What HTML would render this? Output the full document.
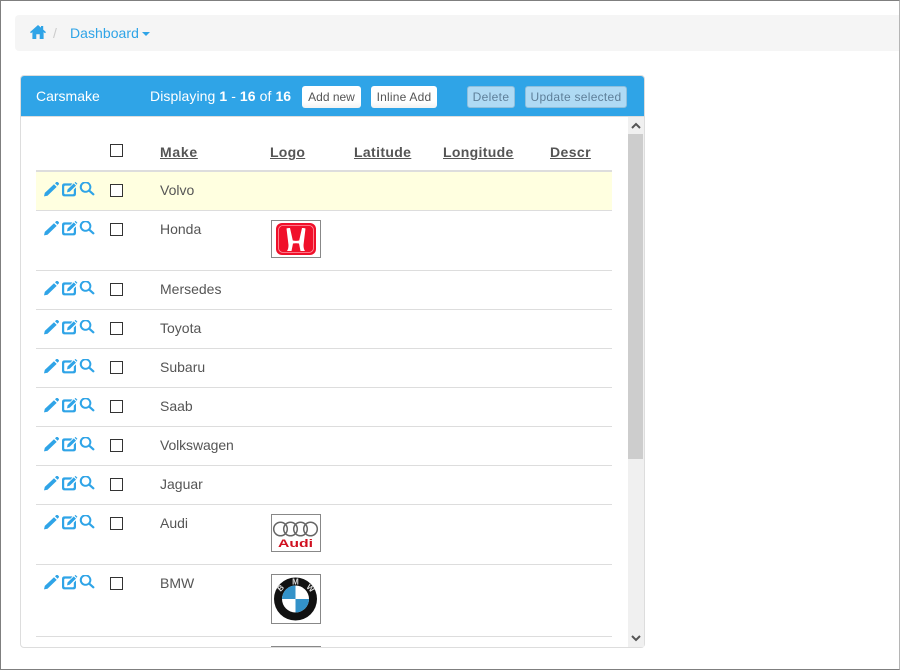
<!DOCTYPE html>
<html><head><meta charset="utf-8"><style>
*{box-sizing:border-box}
html,body{margin:0;padding:0;background:#fff}
body{width:900px;height:670px;position:relative;overflow:hidden;font:14px/20px "Liberation Sans",sans-serif;color:#555}
.a{position:absolute}
.t{position:absolute;white-space:nowrap}
.ln{position:absolute;left:36px;width:576px;height:1px;background:#ddd}
.cb{position:absolute;left:110px;width:13px;height:13px;border:1px solid #333;background:#fff}
.th{position:absolute;top:142px;font-weight:bold;text-decoration:underline;white-space:nowrap;color:#555}
.btn{position:absolute;top:86px;height:22px;background:linear-gradient(#fff 70%,#f2f2f2);border-radius:3px;font-size:12px;line-height:22px;text-align:center;color:#555;white-space:nowrap}
.dis{background:#afdaf4;border:1px solid #8fbfdc;color:#5e7f99;line-height:20px;letter-spacing:.33px}
.img{position:absolute;left:271px;width:50px;border:1px solid #888;background:#fff}
.ic{position:absolute;left:43px;width:52px;height:16px}
</style></head><body>
<svg width="0" height="0" style="position:absolute"><defs>
<g id="icons" fill="#2fa4e7" transform="translate(0,-.6)">
<path d="M1 15 L1.800 11.500 L11 2.800 L13.700 5.500 L4.500 14.300 Z"/><path d="M12 1.800 L13.300 .6 Q14 .1 14.800 .7 L15.800 1.700 Q16.300 2.400 15.700 3.100 L14.500 4.400 Z"/>
<path d="M21.500 2 H29.500 L27.500 4.200 H22.200 Q21.200 4.200 21.200 5.200 V11.800 Q21.200 12.800 22.200 12.800 H29.800 Q30.800 12.800 30.800 11.800 V8.200 L33 6 V12.500 Q33 15 30.500 15 H21.500 Q19 15 19 12.500 V4.500 Q19 2 21.500 2 Z"/><path d="M24.600 8 L30.800 2 L33 4.200 L26.800 10.200 L24 11 Z"/><path d="M31.600 1.300 L32.500 .5 L34.400 2.400 L33.600 3.300 Z"/>
<path fill-rule="evenodd" transform="translate(.6,0)" d="M42 0 A5.700 5.700 0 0 1 46.800 8.800 L50.600 12.200 Q51.200 13 50.500 13.700 Q49.700 14.300 49 13.700 L45.200 10.300 A5.700 5.700 0 1 1 42 0 Z M42 1.900 A3.800 3.800 0 1 0 42 9.500 A3.800 3.800 0 1 0 42 1.900 Z"/>
</g></defs></svg>

<!-- window border -->
<div class="a" style="left:0;top:0;width:900px;height:670px;border:1px solid #7f7f7f;border-right-color:#b5b5b5;z-index:9;pointer-events:none"></div>

<!-- breadcrumb -->
<div class="a" style="left:15px;top:15px;width:884px;height:36px;background:#f5f5f5;border-radius:4px 0 0 4px"></div>
<svg class="a" style="left:30px;top:25px" width="16" height="14" viewBox="0 0 16 14"><path fill="#2fa4e7" d="M8 0 L11 2.600 V1 H13.200 V4.600 L16 7.100 L15 8.200 L13.600 7.100 V14 H9.700 V9.300 H6.300 V14 H2.400 V7.100 L1 8.200 L0 7.100 Z"/></svg>
<div class="t" style="left:53px;top:23px;color:#ccc">/</div>
<div class="t" style="left:70px;top:23px;color:#2fa4e7;letter-spacing:.05px">Dashboard</div>
<div class="a" style="left:142px;top:32px;width:0;height:0;border-left:4px solid transparent;border-right:4px solid transparent;border-top:4px solid #2fa4e7"></div>

<!-- panel -->
<div class="a" style="left:20px;top:75px;width:625px;height:573px;border:1px solid #ddd;border-radius:4px;background:#fff;overflow:hidden"></div>
<div class="a" style="left:21px;top:76px;width:623px;height:41px;background:#2fa4e7;border-radius:3px 3px 0 0;border-bottom:1px solid #ddd"></div>
<div class="t" style="left:36px;top:86px;color:#fff">Carsmake</div>
<div class="t" style="left:150px;top:86px;color:#fff;letter-spacing:.08px">Displaying <b>1</b> - <b>16</b> of <b>16</b></div>
<div class="btn" style="left:302px;width:59px">Add new</div>
<div class="btn" style="left:371px;width:66px;letter-spacing:.2px">Inline Add</div>
<div class="btn dis" style="left:467px;width:48px">Delete</div>
<div class="btn dis" style="left:525px;width:102px;letter-spacing:.28px">Update selected</div>

<!-- scrollbar -->
<div class="a" style="left:628px;top:117px;width:16px;height:530px;background:#f0f0f0"></div>
<div class="a" style="left:628px;top:134px;width:15px;height:325px;background:#cdcdcd"></div>
<svg class="a" style="left:628px;top:117px" width="16" height="17"><path d="M4 11 L8 7 L12 11" fill="none" stroke="#555" stroke-width="2"/></svg>
<svg class="a" style="left:628px;top:631px" width="16" height="16"><path d="M4 5 L8 9 L12 5" fill="none" stroke="#555" stroke-width="2"/></svg>

<!-- header row -->
<div class="cb" style="top:144px"></div>
<div class="th" style="left:160px;letter-spacing:.7px">Make</div>
<div class="th" style="left:270px;letter-spacing:.25px">Logo</div>
<div class="th" style="left:354px;letter-spacing:.36px">Latitude</div>
<div class="th" style="left:443px;letter-spacing:.33px">Longitude</div>
<div class="th" style="left:550px;letter-spacing:.4px">Descr</div>
<div class="a" style="left:36px;top:170px;width:576px;height:2px;background:#ddd"></div>

<!-- highlighted row -->
<div class="a" style="left:36px;top:172px;width:576px;height:38px;background:#ffffe0"></div>

<div class="ln" style="top:210px"></div>
<div class="ln" style="top:270px"></div>
<div class="ln" style="top:309px"></div>
<div class="ln" style="top:348px"></div>
<div class="ln" style="top:387px"></div>
<div class="ln" style="top:426px"></div>
<div class="ln" style="top:465px"></div>
<div class="ln" style="top:504px"></div>
<div class="ln" style="top:564px"></div>
<div class="ln" style="top:636px"></div>

<svg class="ic" style="top:182px" viewBox="0 0 52 16"><use href="#icons"/></svg><div class="cb" style="top:184px"></div><div class="t" style="left:160px;top:180px">Volvo</div>
<svg class="ic" style="top:221px" viewBox="0 0 52 16"><use href="#icons"/></svg><div class="cb" style="top:223px"></div><div class="t" style="left:160px;top:219px">Honda</div>
<svg class="ic" style="top:281px" viewBox="0 0 52 16"><use href="#icons"/></svg><div class="cb" style="top:283px"></div><div class="t" style="left:160px;top:279px">Mersedes</div>
<svg class="ic" style="top:320px" viewBox="0 0 52 16"><use href="#icons"/></svg><div class="cb" style="top:322px"></div><div class="t" style="left:160px;top:318px">Toyota</div>
<svg class="ic" style="top:359px" viewBox="0 0 52 16"><use href="#icons"/></svg><div class="cb" style="top:361px"></div><div class="t" style="left:160px;top:357px">Subaru</div>
<svg class="ic" style="top:398px" viewBox="0 0 52 16"><use href="#icons"/></svg><div class="cb" style="top:400px"></div><div class="t" style="left:160px;top:396px">Saab</div>
<svg class="ic" style="top:437px" viewBox="0 0 52 16"><use href="#icons"/></svg><div class="cb" style="top:439px"></div><div class="t" style="left:160px;top:435px;letter-spacing:-.1px">Volkswagen</div>
<svg class="ic" style="top:476px" viewBox="0 0 52 16"><use href="#icons"/></svg><div class="cb" style="top:478px"></div><div class="t" style="left:160px;top:474px">Jaguar</div>
<svg class="ic" style="top:515px" viewBox="0 0 52 16"><use href="#icons"/></svg><div class="cb" style="top:517px"></div><div class="t" style="left:160px;top:513px">Audi</div>
<svg class="ic" style="top:575px" viewBox="0 0 52 16"><use href="#icons"/></svg><div class="cb" style="top:577px"></div><div class="t" style="left:160px;top:573px">BMW</div>

<!-- Honda -->
<div class="img" style="top:220px;height:38px"><svg width="48" height="36" viewBox="0 0 48 36">
<rect x="4" y="2" width="40" height="32" rx="6" fill="#f0102a"/>
<rect x="6.500" y="4.500" width="35" height="27" rx="4.500" fill="none" stroke="#ff9aa6" stroke-width=".8"/>
<path fill="#fff" d="M14.500 7.500 Q16 6.800 18 7 L20.800 19.500 Q24 20.300 27.200 19.500 L30 7 Q32 6.800 33.500 7.500 L31.500 24 Q31.500 28 33 30 H28.500 L27 22.500 Q24 21.900 21 22.500 L19.500 30 H15 Q16.500 28 16.500 24 Z"/>
</svg></div>

<!-- Audi -->
<div class="img" style="top:514px;height:38px"><svg width="48" height="36" viewBox="0 0 48 36">
<g fill="none" stroke="#666" stroke-width="1.500"><circle cx="8.500" cy="14" r="6.800"/><circle cx="18.500" cy="14" r="6.800"/><circle cx="28.500" cy="14" r="6.800"/><circle cx="38.500" cy="14" r="6.800"/></g>
<text x="6" y="32" textLength="35" lengthAdjust="spacingAndGlyphs" font-family="Liberation Sans" font-weight="bold" font-size="11" fill="#d01020">Audi</text>
</svg></div>

<!-- BMW -->
<div class="img" style="top:574px;height:50px"><svg width="48" height="48" viewBox="0 0 48 48">
<circle cx="23.500" cy="24" r="21.500" fill="#111"/>
<circle cx="23.500" cy="24" r="13.500" fill="#fff"/>
<path d="M23.500 10.500 A13.500 13.500 0 0 0 10 24 H23.500 Z M23.500 24 V37.500 A13.500 13.500 0 0 0 37 24 Z" fill="#3392c9"/>
<text x="23.500" y="9.500" text-anchor="middle" font-family="Liberation Sans" font-weight="bold" font-size="8" fill="#ddd">M</text>
<text x="10.500" y="15" text-anchor="middle" font-family="Liberation Sans" font-weight="bold" font-size="8" fill="#ddd" transform="rotate(-45 10.500 15)">B</text>
<text x="36.500" y="15" text-anchor="middle" font-family="Liberation Sans" font-weight="bold" font-size="8" fill="#ddd" transform="rotate(45 36.500 15)">W</text>
</svg></div>

<!-- next logo, clipped -->
<div class="a" style="left:271px;top:646px;width:50px;height:1px;background:#888"></div>
</body></html>
